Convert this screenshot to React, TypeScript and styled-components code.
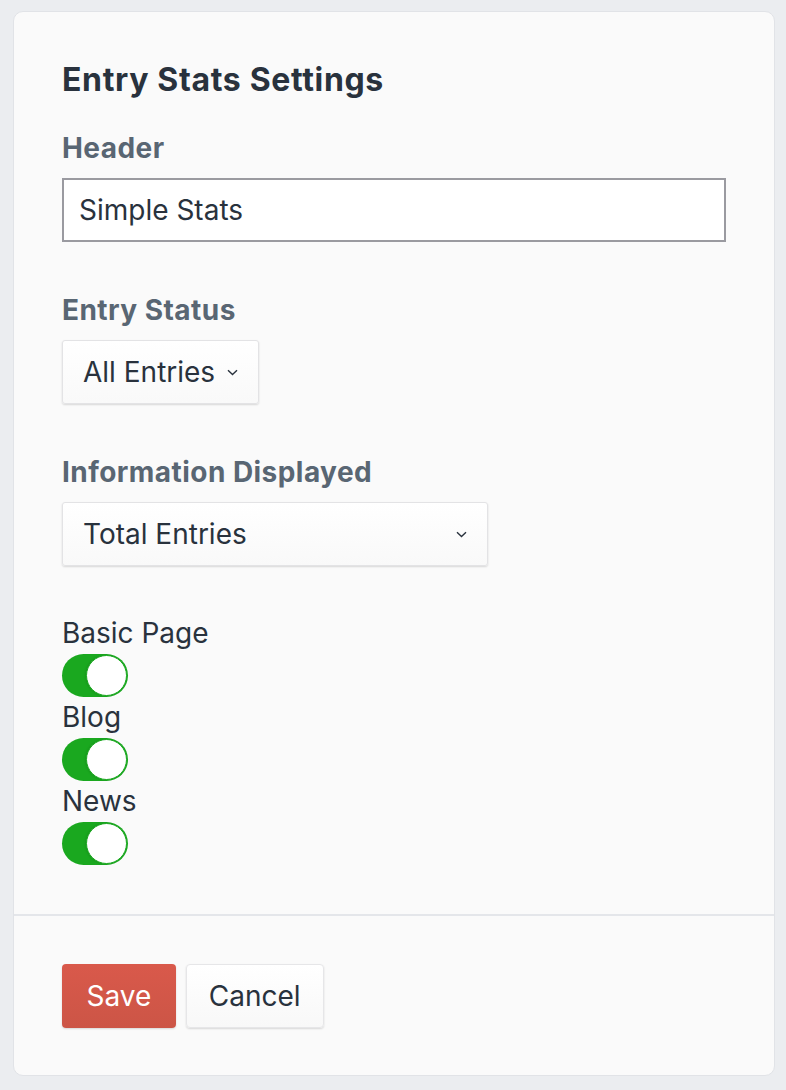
import React from "react";
import styled, { createGlobalStyle } from "styled-components";

const Global = createGlobalStyle`
  html, body { margin: 0; padding: 0; }
  body {
    background: #ebedf0;
    font-family: Inter, "Noto Sans", "Liberation Sans", sans-serif;
    color: #29323d;
    -webkit-font-smoothing: antialiased;
  }
  * { box-sizing: border-box; }
`;

const Page = styled.div`
  padding: 11px 11px 14px 13px;
`;

const Card = styled.div`
  width: 762px;
  height: 1065px;
  background: #fafafa;
  border: 1px solid #e1e3e7;
  border-radius: 10px;
  display: flex;
  flex-direction: column;
`;

const Body = styled.div`
  padding: 50px 48px 49px;
  display: flex;
  flex-direction: column;
  border-bottom: 2px solid #e4e6ea;
`;

const Title = styled.h2`
  margin: 0 0 32px;
  font-size: 32px;
  line-height: 36px;
  font-weight: 700;
  letter-spacing: 0.65px;
  color: #29323d;
`;

const Field = styled.div<{ $gap?: number }>`
  display: flex;
  flex-direction: column;
  align-items: flex-start;
  margin-bottom: ${(p) => p.$gap ?? 50}px;
`;

const Label = styled.label`
  font-size: 28px;
  line-height: 36px;
  font-weight: 700;
  letter-spacing: 0.45px;
  color: #596673;
  margin-bottom: 12px;
`;

const TextInput = styled.input`
  width: 100%;
  height: 64px;
  border: 2px solid #9a9aa0;
  background: #fff;
  padding: 0 15px;
  font-family: inherit;
  font-size: 28px;
  color: #29323d;
  outline: none;
  border-radius: 0;
`;

const SelectBox = styled.div<{ $width?: number }>`
  height: 64px;
  width: ${(p) => (p.$width ? `${p.$width}px` : "auto")};
  display: flex;
  align-items: center;
  justify-content: space-between;
  gap: 12px;
  padding: 0 20px;
  background: linear-gradient(#ffffff, #f9f9f9);
  border: 1px solid #e3e3e5;
  border-radius: 3px;
  box-shadow: 0 1px 2px rgba(0, 0, 0, 0.14);
  font-size: 28px;
  color: #29323d;
`;

const Chevron = styled.svg`
  width: 11px;
  height: 7px;
  flex: none;
`;

const ToggleRow = styled.div`
  display: flex;
  flex-direction: column;
  align-items: flex-start;
`;

const ToggleLabel = styled.div`
  font-size: 28px;
  line-height: 41px;
  color: #29323d;
`;

const Toggle = styled.div`
  width: 66px;
  height: 43px;
  border-radius: 22px;
  background: #1aa81f;
  display: flex;
  justify-content: flex-end;
  align-items: center;
  padding: 1px;
`;

const Knob = styled.div`
  width: 41px;
  height: 41px;
  border-radius: 50%;
  background: #fff;
  border: 1.5px solid #1aa81f;
  box-shadow: -1px 0 2px rgba(0, 0, 0, 0.1);
`;

const Footer = styled.div`
  padding: 48px 48px 47px;
  display: flex;
  gap: 10px;
`;

const Button = styled.button<{ $primary?: boolean }>`
  height: 64px;
  padding: 0 ${(p) => (p.$primary ? 24.5 : 22)}px;
  border-radius: 4px;
  font-family: inherit;
  font-size: 28px;
  border: ${(p) => (p.$primary ? "none" : "1px solid #e6e6e8")};
  color: ${(p) => (p.$primary ? "#fff" : "#29323d")};
  background: ${(p) =>
    p.$primary
      ? "linear-gradient(#d9594b, #cc5546)"
      : "linear-gradient(#ffffff, #f8f8f8)"};
  box-shadow: 0 1px 2px rgba(0, 0, 0, 0.14);
  cursor: pointer;
`;

const ChevronIcon = () => (
  <Chevron viewBox="0 0 11 7">
    <path d="M1 1.2 L5.5 5.5 L10 1.2" fill="none" stroke="#29323d" strokeWidth="1.4" />
  </Chevron>
);

const sections = ["Basic Page", "Blog", "News"];

export default function App() {
  return (
    <>
      <Global />
      <Page>
        <Card>
          <Body>
            <Title>Entry Stats Settings</Title>
            <Field>
              <Label>Header</Label>
              <TextInput defaultValue="Simple Stats" />
            </Field>
            <Field $gap={50}>
              <Label>Entry Status</Label>
              <SelectBox>
                <span>All Entries</span>
                <ChevronIcon />
              </SelectBox>
            </Field>
            <Field $gap={47}>
              <Label>Information Displayed</Label>
              <SelectBox $width={426}>
                <span>Total Entries</span>
                <ChevronIcon />
              </SelectBox>
            </Field>
            {sections.map((s) => (
              <ToggleRow key={s}>
                <ToggleLabel>{s}</ToggleLabel>
                <Toggle>
                  <Knob />
                </Toggle>
              </ToggleRow>
            ))}
          </Body>
          <Footer>
            <Button $primary>Save</Button>
            <Button>Cancel</Button>
          </Footer>
        </Card>
      </Page>
    </>
  );
}
